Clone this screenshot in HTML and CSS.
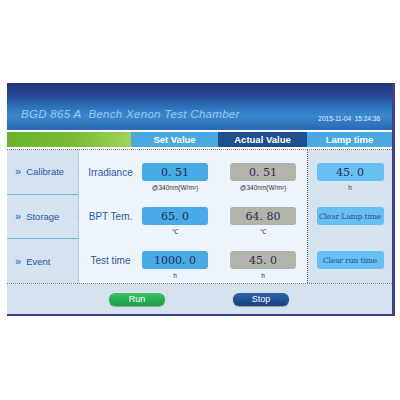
FILE: index.html
```html
<!DOCTYPE html>
<html>
<head>
<meta charset="utf-8">
<link rel="stylesheet" href="styles.css">
</head>
<body>
<div class="frame">
  <div class="header">
    <span class="title">BGD 865 A&nbsp;&nbsp;Bench Xenon Test Chamber</span>
    <span class="date">2015-11-04&nbsp;&nbsp;15:24:36</span>
  </div>
  <div class="tabs">
    <div class="tab green"></div>
    <div class="tab set">Set Value</div>
    <div class="tab actual">Actual Value</div>
    <div class="tab lamp">Lamp time</div>
  </div>
  <div class="content">
    <div class="menu">
      <div class="mitem"><span class="chev">»</span>Calibrate</div>
      <div class="mitem"><span class="chev">»</span>Storage</div>
      <div class="mitem"><span class="chev">»</span>Event</div>
    </div>
    <div class="main">
      <div class="row">
        <div class="label">Irradiance</div>
        <div class="cell"><div class="box setbox">0. 51</div><div class="unit">@340nm(W/m²)</div></div>
        <div class="cell"><div class="box actbox">0. 51</div><div class="unit">@340nm(W/m²)</div></div>
      </div>
      <div class="row">
        <div class="label">BPT Tem.</div>
        <div class="cell"><div class="box setbox">65. 0</div><div class="unit">℃</div></div>
        <div class="cell"><div class="box actbox">64. 80</div><div class="unit">℃</div></div>
      </div>
      <div class="row">
        <div class="label">Test time</div>
        <div class="cell"><div class="box setbox">1000. 0</div><div class="unit">h</div></div>
        <div class="cell"><div class="box actbox">45. 0</div><div class="unit">h</div></div>
      </div>
    </div>
    <div class="side">
      <div class="srow"><div class="box lampbox">45. 0</div><div class="unit">h</div></div>
      <div class="srow"><div class="box lampbox btn">Clear Lamp time</div></div>
      <div class="srow"><div class="box lampbox btn">Clear run time</div></div>
    </div>
  </div>
  <div class="footer">
    <div class="pill run">Run</div>
    <div class="pill stop">Stop</div>
  </div>
</div>
</body>
</html>
```
FILE: styles.css
```css
html, body {
  margin: 0;
  padding: 0;
  background: #ffffff;
  width: 400px;
  height: 400px;
  overflow: hidden;
}
.frame {
  margin-top: 83px;
  margin-left: 7px;
  width: 385px;
  border-right: 3px solid #3c3f8e;
  border-bottom: 2px solid #3c3f8e;
  font-family: "Liberation Sans", Arial, sans-serif;
}
.header {
  height: 47px;
  background: linear-gradient(180deg, #22317a 0%, #284c9a 30%, #2f78c2 55%, #3a88cf 70%, #2868b2 100%);
  display: flex;
  align-items: flex-end;
  justify-content: space-between;
  padding: 0 12px 0 14px;
  box-sizing: border-box;
}
.title {
  color: #9cc8ee;
  font-style: italic;
  font-size: 11.5px;
  letter-spacing: 0.3px;
  margin-bottom: 10px;
}
.date {
  color: #e6f0fa;
  font-size: 6.5px;
  margin-bottom: 8px;
}
.tabs {
  margin-top: 2px;
  display: flex;
  height: 15px;
}
.tab {
  color: #ffffff;
  font-weight: bold;
  font-size: 9.5px;
  display: flex;
  align-items: center;
  justify-content: center;
}
.green {
  width: 124px;
  background: linear-gradient(90deg, #6ab42a 0%, #78bc34 55%, #9fd35e 100%);
}
.set {
  width: 87px;
  background: #4aa8e2;
}
.actual {
  width: 89px;
  background: #1e4f8e;
}
.lamp {
  flex: 1;
  background: #4aa8e2;
}
.content {
  margin-top: 2px;
  border-top: 1px dotted #7a7a7a;
  border-bottom: 1px dotted #7a7a7a;
  display: flex;
  height: 133px;
}
.menu {
  width: 72px;
  background: #d6e2ee;
  border-right: 1px dotted #7fb5dc;
  box-sizing: border-box;
  display: flex;
  flex-direction: column;
}
.mitem {
  flex: 1;
  display: flex;
  align-items: center;
  padding-left: 8px;
  color: #2a58a8;
  font-size: 9.5px;
  border-bottom: 1px solid #6db8e8;
}
.mitem:last-child {
  border-bottom: none;
}
.chev {
  color: #3a8ad8;
  font-size: 11px;
  font-weight: bold;
  margin-right: 5px;
  line-height: 1;
}
.main {
  width: 229px;
  background: #eef4fb;
  border-right: 1px dotted #555555;
  box-sizing: border-box;
  display: flex;
  flex-direction: column;
}
.row {
  height: 44px;
  display: flex;
  align-items: flex-start;
  padding-top: 13px;
  box-sizing: border-box;
}
.label {
  width: 63px;
  height: 18px;
  display: flex;
  align-items: center;
  justify-content: center;
  color: #2a58a8;
  font-size: 10px;
}
.cell {
  width: 66px;
  display: flex;
  flex-direction: column;
  align-items: center;
}
.cell + .cell {
  margin-left: 22px;
}
.box {
  width: 66px;
  height: 18px;
  border-radius: 3px;
  display: flex;
  align-items: center;
  justify-content: center;
  font-family: "DejaVu Serif", "Liberation Serif", serif;
  font-size: 11px;
  color: #1e2f4e;
}
.setbox { background: #48aae6; }
.actbox { background: #b3b4ab; }
.unit {
  font-size: 6.5px;
  color: #333;
  margin-top: 3px;
  height: 8px;
  line-height: 8px;
}
.side {
  flex: 1;
  background: #d6e2ee;
  display: flex;
  flex-direction: column;
}
.srow {
  height: 44px;
  padding-top: 13px;
  box-sizing: border-box;
  display: flex;
  flex-direction: column;
  align-items: center;
}
.lampbox {
  width: 67px;
  background: #66c0f2;
}
.btn {
  font-size: 7.5px;
  color: #2a4d96;
  letter-spacing: -0.1px;
}
.footer {
  height: 30px;
  background: #d6e2ee;
  display: flex;
  align-items: center;
  padding-left: 102px;
  box-sizing: border-box;
}
.pill {
  width: 56px;
  height: 13px;
  border-radius: 6px;
  color: #ffffff;
  font-size: 9px;
  display: flex;
  align-items: center;
  justify-content: center;
  box-shadow: 0 1px 1px rgba(0,0,0,0.3);
}
.run {
  background: linear-gradient(180deg, #3cc064 0%, #15a044 100%);
}
.stop {
  margin-left: 68px;
  background: linear-gradient(180deg, #2e64a8 0%, #173f7c 100%);
}
```
